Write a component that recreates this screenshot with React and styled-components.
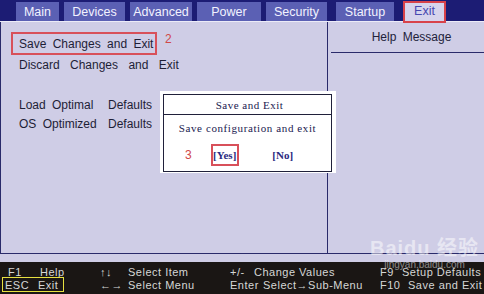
import React from "react";
import styled, { createGlobalStyle } from "styled-components";

const GlobalStyle = createGlobalStyle`
  html, body {
    margin: 0;
    padding: 0;
    background: #1a1614;
  }
`;

const Screen = styled.div`
  position: relative;
  width: 484px;
  height: 294px;
  overflow: hidden;
  display: flex;
  flex-direction: column;
  font-family: "Liberation Sans", Arial, sans-serif;
  background: #cfcde6;
`;

const TabBar = styled.div`
  height: 21px;
  background: #1c1c74;
  display: flex;
  align-items: flex-end;
  padding-left: 16px;
  gap: 5px;
  border-bottom: 1px solid #ecebf7;
`;

const Tab = styled.div`
  height: 19px;
  width: ${(p) => p.w}px;
  margin-left: ${(p) => p.ml || 0}px;
  box-sizing: border-box;
  display: flex;
  align-items: center;
  justify-content: center;
  font-size: 12.5px;
  color: ${(p) => (p.active ? "#4848b0" : "#f2f2ff")};
  background: ${(p) => (p.active ? "#d6d4ec" : "#5b60b4")};
  border: ${(p) => (p.active ? "2px solid #d8424a" : "none")};
  ${(p) =>
    p.active &&
    "height: 22px; margin-bottom: -2px; align-items: flex-start; padding-top: 1px;"}
`;

const Frame = styled.div`
  height: 231px;
  display: flex;
  border-left: 1px solid #2a2a6a;
  border-bottom: 1px solid #2a2a6a;
`;

const LeftPanel = styled.div`
  width: 327px;
  border-right: 1px solid #2a2a6a;
  padding: 10px 0 0 10px;
  box-sizing: border-box;
`;

const RightPanel = styled.div`
  flex: 1;
`;

const HelpTitle = styled.div`
  height: 30px;
  margin-left: 3px;
  border-bottom: 1px solid #2a2a6a;
  display: flex;
  align-items: center;
  justify-content: center;
  padding-left: 8px;
  font-size: 12px;
  word-spacing: 3px;
  color: #22223a;
`;

const Item = styled.div`
  display: flex;
  align-items: center;
  height: 19px;
  margin-top: ${(p) => p.mt || 0}px;
  padding-left: 8px;
  font-size: 12px;
  color: #1e1e36;
  word-spacing: ${(p) => p.ws || 3}px;
`;

const Selected = styled.div`
  display: flex;
  align-items: center;
  width: 146px;
  height: 23px;
  box-sizing: border-box;
  border: 2px solid #d8505a;
  padding-left: 6px;
  font-size: 12px;
  color: #1e1e36;
  word-spacing: 3px;
`;

const SelRow = styled.div`
  display: flex;
  align-items: flex-start;
  gap: 8px;
`;

const Mark = styled.span`
  color: #d04848;
  font-size: 12px;
  font-family: "Liberation Sans", Arial, sans-serif;
`;

const Col = styled.span`
  display: inline-block;
  width: 89px;
`;

const Dialog = styled.div`
  position: absolute;
  left: 160px;
  top: 91px;
  width: 176px;
  height: 82px;
  background: #ffffff;
  padding: 3px 4px 3px 3px;
  box-sizing: border-box;
`;

const DialogInner = styled.div`
  height: 100%;
  border: 1px solid #20203a;
  display: flex;
  flex-direction: column;
  font-family: "Liberation Serif", "Times New Roman", serif;
  font-size: 11px;
  color: #1a1a50;
`;

const DialogTitle = styled.div`
  height: 19px;
  border-bottom: 1px solid #20203a;
  display: flex;
  align-items: center;
  justify-content: center;
  padding-left: 4px;
  letter-spacing: 0.5px;
`;

const DialogText = styled.div`
  height: 26px;
  display: flex;
  align-items: center;
  justify-content: center;
  letter-spacing: 0.6px;
`;

const Choices = styled.div`
  display: flex;
  align-items: center;
  padding-left: 21px;
  margin-top: 3px;
`;

const Choice = styled.div`
  height: 22px;
  display: flex;
  align-items: center;
  justify-content: center;
  width: 28px;
  box-sizing: border-box;
  margin-left: ${(p) => p.ml}px;
  border: ${(p) => (p.boxed ? "2px solid #d8505a" : "none")};
  font-weight: bold;
  color: #2a2a80;
`;

const Footer = styled.div`
  flex: 1;
  margin-top: 8px;
  background: #1a1614;
  display: grid;
  grid-template-columns: 94px 130px 150px 1fr;
  grid-auto-rows: 13px;
  align-content: center;
  padding-left: 6px;
  font-size: 11px;
  color: #d6d6d6;
  letter-spacing: 0.5px;
`;

const Cell = styled.div`
  display: flex;
  align-items: center;
  white-space: nowrap;
`;

const Key = styled.span`
  display: inline-block;
  width: ${(p) => p.w}px;
  padding-left: ${(p) => p.pl || 0}px;
`;

const EscBox = styled.div`
  display: flex;
  align-items: center;
  margin-left: -4px;
  padding-left: 2px;
  width: 62px;
  height: 15px;
  box-sizing: border-box;
  border: 1px solid #e6e040;
`;

const Watermark = styled.div`
  position: absolute;
  left: 370px;
  top: 238px;
  color: rgba(255, 255, 255, 0.5);
  text-align: center;
  line-height: 1;
`;

const WmLogo = styled.div`
  font-size: 20px;
  font-weight: bold;
  letter-spacing: 1px;
  font-family: "Liberation Sans", "Noto Sans CJK SC", sans-serif;
`;

const WmUrl = styled.div`
  font-size: 10px;
  margin-top: 2px;
`;

const tabs = [
  { label: "Main", w: 43 },
  { label: "Devices", w: 61 },
  { label: "Advanced", w: 62 },
  { label: "Power", w: 64 },
  { label: "Security", w: 61 },
  { label: "Startup", w: 58, ml: 4 },
  { label: "Exit", w: 43, ml: 4, active: true },
];

const App = () => {
  return (
    <>
      <GlobalStyle />
      <Screen>
        <TabBar>
          {tabs.map((t) => (
            <Tab key={t.label} w={t.w} ml={t.ml} active={t.active}>
              {t.label}
            </Tab>
          ))}
        </TabBar>
        <Frame>
          <LeftPanel>
            <SelRow>
              <Selected>Save Changes and Exit</Selected>
              <Mark>2</Mark>
            </SelRow>
            <Item ws={7}>Discard Changes and Exit</Item>
            <Item mt={21}>
              <Col>Load Optimal</Col>Defaults
            </Item>
            <Item>
              <Col>OS Optimized</Col>Defaults
            </Item>
          </LeftPanel>
          <RightPanel>
            <HelpTitle>Help Message</HelpTitle>
          </RightPanel>
        </Frame>
        <Footer>
          <Cell>
            <Key w={32} pl={2}>F1</Key>Help
          </Cell>
          <Cell>
            <Key w={28}>↑↓</Key>Select Item
          </Cell>
          <Cell>
            <Key w={24}>+/-</Key>Change Values
          </Cell>
          <Cell>
            <Key w={22}>F9</Key>Setup Defaults
          </Cell>
          <Cell>
            <EscBox>
              <Key w={33}>ESC</Key>Exit
            </EscBox>
          </Cell>
          <Cell>
            <Key w={28}>←→</Key>Select Menu
          </Cell>
          <Cell>
            <Key w={33}>Enter</Key>Select→Sub-Menu
          </Cell>
          <Cell>
            <Key w={28}>F10</Key>Save and Exit
          </Cell>
        </Footer>
        <Dialog>
          <DialogInner>
            <DialogTitle>Save and Exit</DialogTitle>
            <DialogText>Save configuration and exit</DialogText>
            <Choices>
              <Mark>3</Mark>
              <Choice ml={19} boxed>
                [Yes]
              </Choice>
              <Choice ml={30}>[No]</Choice>
            </Choices>
          </DialogInner>
        </Dialog>
        <Watermark>
          <WmLogo>Baidu 经验</WmLogo>
          <WmUrl>jingyan.baidu.com</WmUrl>
        </Watermark>
      </Screen>
    </>
  );
};

export default App;
